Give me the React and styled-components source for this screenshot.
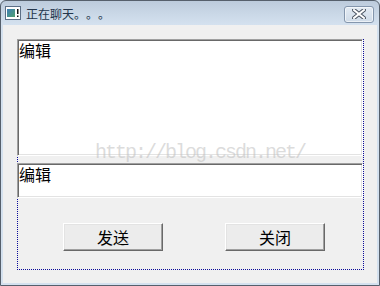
import React from 'react'
import styled, { createGlobalStyle } from 'styled-components'

const GlobalStyle = createGlobalStyle`
  html, body {
    margin: 0;
    padding: 0;
    background: #d3e0ee;
  }
  #root {
    width: 380px;
    height: 286px;
  }
`

const Window = styled.div`
  position: relative;
  box-sizing: border-box;
  width: 380px;
  height: 286px;
  display: flex;
  flex-direction: column;
  border: 1px solid #56606c;
  border-radius: 6px 6px 0 0;
  background: linear-gradient(to bottom, #bccbdc 0px, #c9d7e6 12px, #d4e1ef 24px, #d4e1ef 100%);
  padding: 0 2px 2px 2px;
  font-family: "Noto Sans CJK SC", "Noto Sans", sans-serif;
`

const TitleBar = styled.div`
  height: 24px;
  display: flex;
  align-items: center;
  padding-left: 2px;
  padding-right: 3px;
`

const TitleText = styled.span`
  margin-left: 5px;
  font-size: 12px;
  line-height: 12px;
  color: #24364c;
  margin-top: 1px;
  flex: 1;
  text-spacing-trim: space-all;
  font-feature-settings: "fwid" 1;
`

const CloseButton = styled.div`
  box-sizing: border-box;
  width: 30px;
  height: 17px;
  margin-top: 2px;
  border: 1px solid #8496ad;
  border-radius: 3px;
  background: linear-gradient(to bottom, #e3ebf4, #cfdbe8);
  box-shadow: inset 0 0 0 1px rgba(255, 255, 255, 0.6);
  display: flex;
  align-items: center;
  justify-content: center;
`

const Content = styled.div`
  flex: 1;
  background: #f0f0f0;
  padding: 14px 0 0 14px;
`

const Frame = styled.div`
  box-sizing: border-box;
  width: 347px;
  height: 231px;
  border: 1px dotted #0a0a9a;
  display: flex;
  flex-direction: column;
`

const Edit = styled.div`
  box-sizing: border-box;
  width: 346px;
  height: ${p => p.$h}px;
  margin: ${p => p.$mt}px 0 0 -1px;
  background: #fff;
  border-top: 1px solid #a0a0a0;
  border-left: 1px solid #a0a0a0;
  border-bottom: 1px solid #fff;
  border-right: 1px solid #fff;
  box-shadow: inset 1px 1px 0 #696969, inset -1px -1px 0 #e3e3e3;
  padding: 1px 0 0 1px;
  font-size: 16px;
  line-height: 18px;
  color: #000;
`

const ButtonRow = styled.div`
  display: flex;
  margin-top: 25px;
  padding-left: 45px;
  gap: 62px;
`

const Button = styled.div`
  box-sizing: border-box;
  width: 100px;
  height: 28px;
  background: #ececec;
  border-top: 1px solid #fff;
  border-left: 1px solid #fff;
  border-bottom: 1px solid #696969;
  border-right: 1px solid #696969;
  box-shadow: inset -1px -1px 0 #a0a0a0, inset 1px 1px 0 #e3e3e3;
  display: flex;
  align-items: center;
  justify-content: center;
  font-size: 16px;
  color: #000;
`

const Watermark = styled.div`
  position: absolute;
  left: 94px;
  top: 140px;
  font-family: "Liberation Mono", monospace;
  font-size: 20px;
  letter-spacing: -2px;
  color: rgba(190, 190, 190, 0.55);
  pointer-events: none;
`

const AppIcon = () => (
  <svg width="16" height="14" viewBox="0 0 16 14">
    <rect x="0.5" y="0.5" width="15" height="13" fill="#fff" stroke="#5c6f86" />
    <defs>
      <linearGradient id="ig" x1="0" y1="0" x2="1" y2="1">
        <stop offset="0" stopColor="#3f7fb8" />
        <stop offset="1" stopColor="#4fa070" />
      </linearGradient>
    </defs>
    <rect x="2" y="3" width="8" height="8" fill="url(#ig)" />
    <rect x="12" y="3" width="1.5" height="5" fill="#111" />
    <rect x="12" y="9.5" width="1.5" height="1.5" fill="#111" />
  </svg>
)

const CloseGlyph = () => (
  <svg width="14" height="10" viewBox="0 0 14 10">
    <path d="M2 1 L12 9 M12 1 L2 9" stroke="#4a5462" strokeWidth="4" strokeLinecap="square" />
    <path d="M2 1 L12 9 M12 1 L2 9" stroke="#fff" strokeWidth="2" strokeLinecap="square" />
  </svg>
)

export default function App() {
  return (
    <>
      <GlobalStyle />
      <Window>
        <TitleBar>
          <AppIcon />
          <TitleText>正在聊天。。。</TitleText>
          <CloseButton><CloseGlyph /></CloseButton>
        </TitleBar>
        <Content>
          <Frame>
            <Edit $h={117} $mt={-1}>编辑</Edit>
            <Edit $h={35} $mt={7}>编辑</Edit>
            <ButtonRow>
              <Button>发送</Button>
              <Button>关闭</Button>
            </ButtonRow>
          </Frame>
        </Content>
        <Watermark>http://blog.csdn.net/</Watermark>
      </Window>
    </>
  )
}
